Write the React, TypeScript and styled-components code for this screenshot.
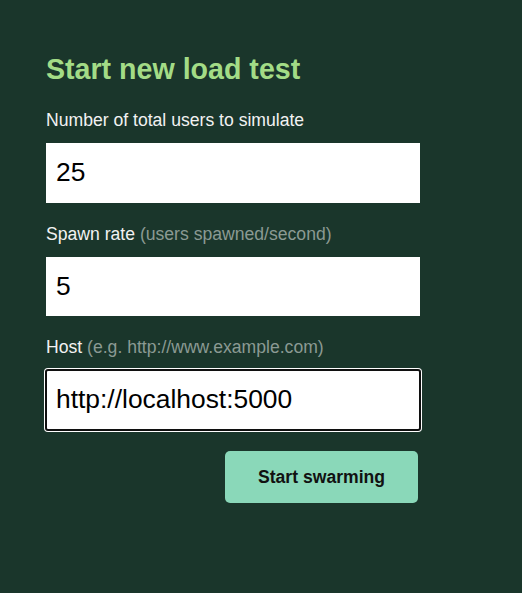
import React from "react";
import styled, { createGlobalStyle } from "styled-components";

const GlobalStyle = createGlobalStyle`
  html, body {
    margin: 0;
    padding: 0;
    background: #1a362b;
  }
  body {
    font-family: "Liberation Sans", Arial, sans-serif;
    font-size: 17.6px;
    color: #f2f2f2;
  }
`;

const Page = styled.main`
  min-height: 100vh;
  box-sizing: border-box;
  padding: 53px 46px;
`;

const Title = styled.h2`
  margin: 0 0 24px;
  font-size: 28.6px;
  font-weight: 700;
  line-height: normal;
  color: #a3dc86;
`;

const Form = styled.form`
  width: 374px;
  display: flex;
  flex-direction: column;
  gap: 21px;
`;

const Field = styled.label`
  display: flex;
  flex-direction: column;
  gap: 12px;
`;

const LabelText = styled.span`
  line-height: normal;
`;

const Hint = styled.span`
  color: #8b9a93;
`;

const TextInput = styled.input<{ $focused?: boolean }>`
  box-sizing: border-box;
  width: 100%;
  height: 59.5px;
  margin: 0;
  padding: 0 10px;
  border: none;
  border-radius: ${(p) => (p.$focused ? "2px" : "0")};
  background: #fff;
  color: #000;
  font-family: "Liberation Sans", Arial, sans-serif;
  font-size: 26.4px;
  outline: ${(p) => (p.$focused ? "2px solid #101010" : "none")};
  outline-offset: -1px;
  box-shadow: ${(p) => (p.$focused ? "0 0 0 2px #fff" : "none")};
`;

const Actions = styled.div`
  display: flex;
  justify-content: flex-end;
  margin-top: 0.5px;
  padding-right: 2px;
`;

const SubmitButton = styled.button`
  width: 193px;
  height: 52px;
  border: none;
  border-radius: 5px;
  background: #8ad8b9;
  color: #111;
  font-family: "Liberation Sans", Arial, sans-serif;
  font-size: 17.6px;
  font-weight: 700;
  cursor: pointer;
`;

const fields = [
  { label: "Number of total users to simulate", hint: "", value: "25" },
  { label: "Spawn rate", hint: "(users spawned/second)", value: "5" },
  { label: "Host", hint: "(e.g. http://www.example.com)", value: "http://localhost:5000", focused: true },
];

export default function App() {
  return (
    <>
      <GlobalStyle />
      <Page>
        <Title>Start new load test</Title>
        <Form onSubmit={(e) => e.preventDefault()}>
          {fields.map((f) => (
            <Field key={f.label}>
              <LabelText>
                {f.label}
                {f.hint && <Hint> {f.hint}</Hint>}
              </LabelText>
              <TextInput defaultValue={f.value} $focused={f.focused} />
            </Field>
          ))}
          <Actions>
            <SubmitButton type="submit">Start swarming</SubmitButton>
          </Actions>
        </Form>
      </Page>
    </>
  );
}
